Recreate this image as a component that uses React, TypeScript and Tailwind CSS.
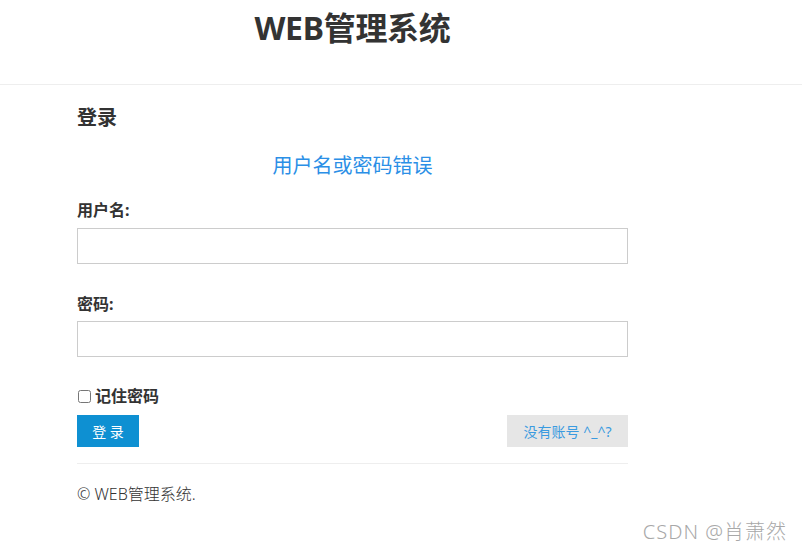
import React from "react";

const font = {
  fontFamily: '"Noto Sans", "Noto Sans CJK SC", sans-serif',
};

export default function App() {
  return (
    <div className="relative w-[802px] h-[552px] bg-white text-[#333]" style={font}>
      <div className="h-[85px] border-b border-[#eee]">
        <div className="w-[551px] ml-[77px] pt-[8px] text-center">
          <h1 className="text-[32px] leading-[40px] font-bold text-[#333] tracking-[-0.3px]">WEB管理系统</h1>
        </div>
      </div>

      <div className="w-[551px] ml-[77px] flex flex-col">
        <h2 className="mt-[19px] text-[20px] leading-[28px] font-bold">登录</h2>
        <p className="mt-[20px] text-center text-[20px] leading-[28px] text-[#2b8fe6]">
          用户名或密码错误
        </p>

        <label className="mt-[18px] text-[16px] leading-[24px] font-bold">用户名:</label>
        <input
          type="text"
          className="mt-[6px] h-[36px] w-full border border-[#ccc] bg-white px-2 outline-none"
        />

        <label className="mt-[28px] text-[16px] leading-[24px] font-bold">密码:</label>
        <input
          type="password"
          className="mt-[5px] h-[36px] w-full border border-[#ccc] bg-white px-2 outline-none"
        />

        <label className="mt-[27px] flex items-center gap-[4px] text-[16px] leading-[24px] font-bold">
          <input type="checkbox" className="ml-[1px] w-[13px] h-[13px]" />
          记住密码
        </label>

        <div className="mt-[7px] flex items-center justify-between">
          <button className="h-[32px] w-[62px] bg-[#0e90d2] text-white text-[14px]">
            登 录
          </button>
          <button className="h-[32px] w-[121px] bg-[#e6e6e6] text-[#3a9be0] text-[14px]">
            没有账号 ^_^?
          </button>
        </div>

        <hr className="mt-[16px] border-t border-[#eee]" />

        <p className="mt-[20px] text-[16px] leading-[20px] text-[#333] font-light">© WEB管理系统.</p>
      </div>

      <div className="absolute right-[15px] top-[518px] text-[20px] leading-[28px] tracking-[1px] text-[#a8a8a8] font-light">
        CSDN @肖萧然
      </div>
    </div>
  );
}
